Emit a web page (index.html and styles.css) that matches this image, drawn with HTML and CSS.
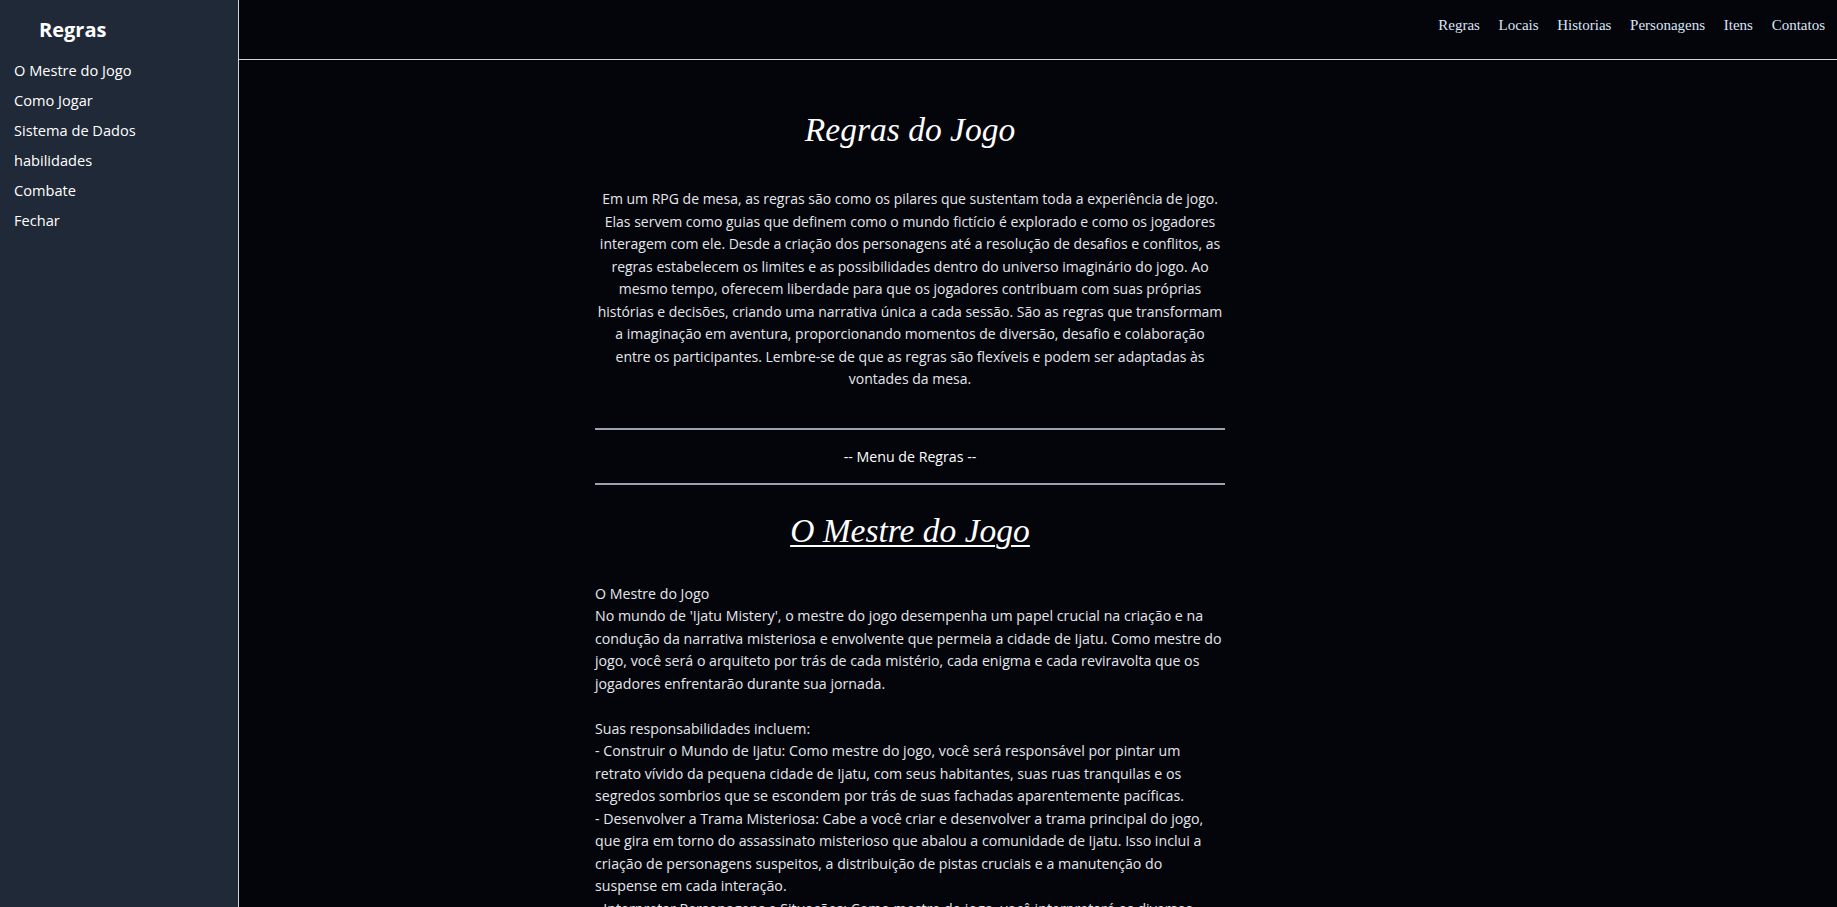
FILE: index.html
```html
<!DOCTYPE html>
<html lang="pt-BR">
<head>
<meta charset="utf-8">
<title>Regras</title>
<link rel="stylesheet" href="styles.css">
</head>
<body>
<div class="layout">
  <aside class="sidebar">
    <h2 class="sidebar-title">Regras</h2>
    <ul class="sidebar-list">
      <li><a href="#mestre">O Mestre do Jogo</a></li>
      <li><a href="#jogar">Como Jogar</a></li>
      <li><a href="#dados">Sistema de Dados</a></li>
      <li><a href="#hab">habilidades</a></li>
      <li><a href="#combate">Combate</a></li>
      <li><a href="#">Fechar</a></li>
    </ul>
  </aside>
  <div class="main">
    <header class="topbar">
      <nav class="topnav">
        <a href="#">Regras</a>
        <a href="#">Locais</a>
        <a href="#">Historias</a>
        <a href="#">Personagens</a>
        <a href="#">Itens</a>
        <a href="#">Contatos</a>
      </nav>
    </header>
    <div class="content-wrap">
      <main class="content">
        <h1 class="title">Regras do Jogo</h1>
        <p class="intro">Em um RPG de mesa, as regras são como os pilares que sustentam toda a experiência de jogo.<br>Elas servem como guias que definem como o mundo fictício é explorado e como os jogadores<br>interagem com ele. Desde a criação dos personagens até a resolução de desafios e conflitos, as<br>regras estabelecem os limites e as possibilidades dentro do universo imaginário do jogo. Ao<br>mesmo tempo, oferecem liberdade para que os jogadores contribuam com suas próprias<br>histórias e decisões, criando uma narrativa única a cada sessão. São as regras que transformam<br>a imaginação em aventura, proporcionando momentos de diversão, desafio e colaboração<br>entre os participantes. Lembre-se de que as regras são flexíveis e podem ser adaptadas às<br>vontades da mesa.</p>
        <hr class="rule">
        <p class="menu-label">-- Menu de Regras --</p>
        <hr class="rule">
        <h2 class="section-title" id="mestre">O Mestre do Jogo</h2>
        <p class="section-text">O Mestre do Jogo<br>No mundo de 'Ijatu Mistery', o mestre do jogo desempenha um papel crucial na criação e na condução da narrativa misteriosa e envolvente que permeia a cidade de Ijatu. Como mestre do jogo, você será o arquiteto por trás de cada mistério, cada enigma e cada reviravolta que os jogadores enfrentarão durante sua jornada.<br><br>Suas responsabilidades incluem:<br>- Construir o Mundo de Ijatu: Como mestre do jogo, você será responsável por pintar um retrato vívido da pequena cidade de Ijatu, com seus habitantes, suas ruas tranquilas e os segredos sombrios que se escondem por trás de suas fachadas aparentemente pacíficas.<br>- Desenvolver a Trama Misteriosa: Cabe a você criar e desenvolver a trama principal do jogo, que gira em torno do assassinato misterioso que abalou a comunidade de Ijatu. Isso inclui a criação de personagens suspeitos, a distribuição de pistas cruciais e a manutenção do suspense em cada interação.<br>- Interpretar Personagens e Situações: Como mestre do jogo, você interpretará os diversos personagens que os jogadores encontrarão, dando voz a cada um deles e reagindo às escolhas do grupo.</p>
      </main>
    </div>
  </div>
</div>
</body>
</html>
```

FILE: styles.css
```css
* { box-sizing: border-box; }
html, body {
  margin: 0;
  padding: 0;
  height: 100%;
  overflow: hidden;
  background: #03050b;
}
body {
  font-family: "Open Sans", "Noto Sans", sans-serif;
  color: #e5e7eb;
}
.layout {
  display: flex;
  height: 907px;
}
.sidebar {
  width: 239px;
  flex: none;
  background: #1f2937;
  border-right: 1px solid #d1d5db;
  padding: 16px 0 0 14px;
}
.sidebar-title {
  margin: 0 0 0 25px;
  font-size: 20px;
  font-weight: 700;
  color: #ffffff;
  line-height: 28px;
}
.sidebar-list {
  list-style: none;
  margin: 0;
  padding: 11px 0 0 0;
}
.sidebar-list li {
  height: 30px;
  line-height: 30px;
  font-size: 14.6px;
}
.sidebar-list a {
  color: #ffffff;
  text-decoration: none;
}
.main {
  flex: 1;
  display: flex;
  flex-direction: column;
  min-width: 0;
}
.topbar {
  flex: none;
  height: 60px;
  border-bottom: 1px solid #d1d5db;
  display: flex;
  justify-content: flex-end;
  align-items: flex-start;
  padding: 17px 12px 0 0;
}
.topnav {
  display: flex;
  gap: 18.7px;
}
.topnav a {
  font-family: "Liberation Serif", "Times New Roman", serif;
  font-size: 15px;
  color: #dbe4f5;
  text-decoration: none;
}
.content-wrap {
  flex: 1;
  margin-left: -239px;
  padding-right: 17px;
}
.content {
  width: 630px;
  margin: 0 auto;
}
.title {
  font-family: "Liberation Serif", "Times New Roman", serif;
  font-style: italic;
  font-weight: 400;
  font-size: 33.5px;
  line-height: 38px;
  text-align: center;
  color: #ffffff;
  margin: 51px 0 0 0;
}
.intro {
  margin: 39px 0 0 0;
  font-size: 14px;
  line-height: 22.5px;
  text-align: center;
  white-space: nowrap;
}
.rule {
  border: 0;
  height: 2px;
  background: #9ca3af;
  margin: 37px 0 0 0;
}
.menu-label {
  margin: 0;
  height: 53px;
  line-height: 53px;
  text-align: center;
  font-size: 14.2px;
  color: #ffffff;
}
.menu-label + .rule {
  margin-top: 0;
}
.section-title {
  font-family: "Liberation Serif", "Times New Roman", serif;
  font-style: italic;
  font-weight: 400;
  font-size: 33.5px;
  line-height: 38px;
  text-align: center;
  text-decoration: underline;
  text-decoration-thickness: 2px;
  text-underline-offset: 3px;
  color: #ffffff;
  margin: 27px 0 0 0;
}
.section-text {
  margin: 33px 0 0 0;
  font-size: 14.2px;
  line-height: 22.5px;
  text-align: left;
}
```
